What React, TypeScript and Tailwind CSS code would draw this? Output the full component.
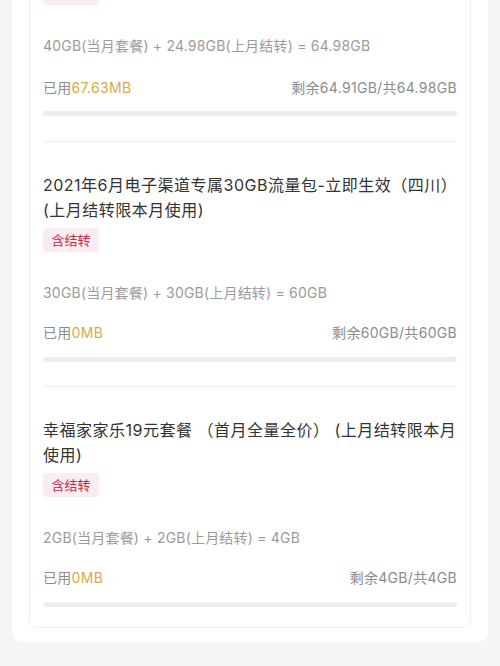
import React from "react";

type Item = {
  title: string[];
  formula: string;
  used: string;
  remain: string;
};

const font = { fontFamily: 'Inter, "Noto Sans CJK SC", "Noto Sans", sans-serif' };

function Badge({ top }: { top?: boolean }) {
  return (
    <div
      className={`flex h-[24px] w-[56px] justify-center rounded-[3px] bg-[#fdecef] text-[13px] text-[#c4264f] ${
        top ? "items-start" : "items-center"
      }`}
    >
      <span className="leading-none">含结转</span>
    </div>
  );
}

function Usage({ used, remain }: { used: string; remain: string }) {
  return (
    <div className="flex items-center justify-between text-[14px] leading-[20px] tracking-[0.3px] text-[#8c8c8c]">
      <div>
        已用<span className="text-[#d8ab48]">{used}</span>
      </div>
      <div>{remain}</div>
    </div>
  );
}

function Bar() {
  return <div className="h-[5px] w-full rounded-full bg-[#ededed]" />;
}

function Section({ item, last }: { item: Item; last?: boolean }) {
  return (
    <div className={`border-t border-[#f1f1f1] pt-[31px] ${last ? "pb-[20px]" : "pb-[24px]"}`}>
      <div className="text-[16px] leading-[25px] tracking-[0.5px] text-[#333333]">
        {item.title.map((t, i) => (
          <div key={i} className="whitespace-pre">
            {t}
          </div>
        ))}
      </div>
      <div className="mt-[5px]">
        <Badge />
      </div>
      <div className="mt-[31px] text-[14px] leading-[20px] tracking-[0.2px] text-[#9b9b9b]">{item.formula}</div>
      <div className="mt-[20px]">
        <Usage used={item.used} remain={item.remain} />
      </div>
      <div className="mt-[14px]">
        <Bar />
      </div>
    </div>
  );
}

export default function App() {
  const items: Item[] = [
    {
      title: ["2021年6月电子渠道专属30GB流量包-立即生效（四川）", "(上月结转限本月使用)"],
      formula: "30GB(当月套餐) + 30GB(上月结转) = 60GB",
      used: "0MB",
      remain: "剩余60GB/共60GB",
    },
    {
      title: ["幸福家家乐19元套餐 （首月全量全价） (上月结转限本月", "使用)"],
      formula: "2GB(当月套餐) + 2GB(上月结转) = 4GB",
      used: "0MB",
      remain: "剩余4GB/共4GB",
    },
  ];
  return (
    <div className="min-h-[666px] w-[500px] overflow-hidden bg-[#f5f5f5]" style={font}>
      <div className="mx-[12px] -mt-[30px] rounded-b-[10px] bg-white pb-[14px] pl-[17px] pr-[17px]">
        <div className="rounded-b-[8px] border border-t-0 border-[#eeeeee] px-[13px]">
          <div className="pt-[11px] pb-[25px]">
            <Badge top />
            <div className="mt-[31px] text-[14px] leading-[20px] tracking-[0.2px] text-[#9b9b9b]">
              40GB(当月套餐) + 24.98GB(上月结转) = 64.98GB
            </div>
            <div className="mt-[22px]">
              <Usage used="67.63MB" remain="剩余64.91GB/共64.98GB" />
            </div>
            <div className="mt-[13px]">
              <Bar />
            </div>
          </div>
          <Section item={items[0]} />
          <Section item={items[1]} last />
        </div>
      </div>
    </div>
  );
}
